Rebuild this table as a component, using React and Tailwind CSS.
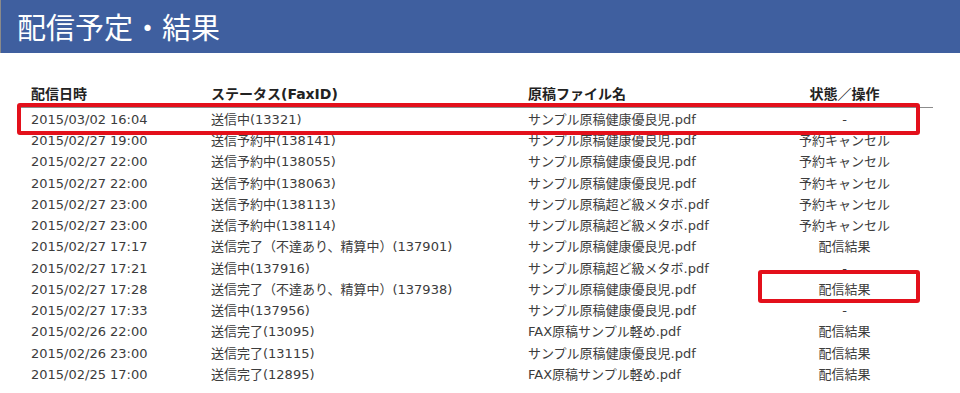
const rows = [
  ["2015/03/02 16:04", "送信中(13321)", "サンプル原稿健康優良児.pdf", "-"],
  ["2015/02/27 19:00", "送信予約中(138141)", "サンプル原稿健康優良児.pdf", "予約キャンセル"],
  ["2015/02/27 22:00", "送信予約中(138055)", "サンプル原稿健康優良児.pdf", "予約キャンセル"],
  ["2015/02/27 22:00", "送信予約中(138063)", "サンプル原稿健康優良児.pdf", "予約キャンセル"],
  ["2015/02/27 23:00", "送信予約中(138113)", "サンプル原稿超ど級メタボ.pdf", "予約キャンセル"],
  ["2015/02/27 23:00", "送信予約中(138114)", "サンプル原稿超ど級メタボ.pdf", "予約キャンセル"],
  ["2015/02/27 17:17", "送信完了（不達あり、精算中）(137901)", "サンプル原稿健康優良児.pdf", "配信結果"],
  ["2015/02/27 17:21", "送信中(137916)", "サンプル原稿超ど級メタボ.pdf", "-"],
  ["2015/02/27 17:28", "送信完了（不達あり、精算中）(137938)", "サンプル原稿健康優良児.pdf", "配信結果"],
  ["2015/02/27 17:33", "送信中(137956)", "サンプル原稿健康優良児.pdf", "-"],
  ["2015/02/26 22:00", "送信完了(13095)", "FAX原稿サンプル軽め.pdf", "配信結果"],
  ["2015/02/26 23:00", "送信完了(13115)", "サンプル原稿健康優良児.pdf", "配信結果"],
  ["2015/02/25 17:00", "送信完了(12895)", "FAX原稿サンプル軽め.pdf", "配信結果"],
];

export default function App() {
  return (
    <div className="relative w-[960px] h-[393px] overflow-hidden bg-white font-['DejaVu_Sans','Noto_Sans_CJK_JP',sans-serif]">
      <div className="h-[53px] flex items-center pl-[16px] bg-[#3f5f9f] border-l border-[#8a8a8a] text-white text-[29px] font-['Noto_Sans_CJK_JP',sans-serif]">
        配信予定・結果
      </div>

      <div className="ml-[17px] w-[916px] mt-[29px]">
        <div className="grid grid-cols-[194px_317px_228px_177px] h-[26px] items-center border-b border-[#8c8c8c] text-[14px] font-bold text-[#222]">
          <div className="pl-[14px]">配信日時</div>
          <div>ステータス(FaxID)</div>
          <div>原稿ファイル名</div>
          <div className="text-center">状態／操作</div>
        </div>
        <div className="pt-[1px]">
          {rows.map((r, i) => (
            <div
              key={i}
              className="grid grid-cols-[194px_317px_228px_177px] h-[21.25px] items-center text-[13px] text-[#3c3c3c] whitespace-nowrap"
            >
              <div className="pl-[14px]">{r[0]}</div>
              <div>{r[1]}</div>
              <div>{r[2]}</div>
              <div className="text-center">{r[3]}</div>
            </div>
          ))}
        </div>
      </div>

      {/* highlight boxes */}
      <div className="absolute left-[17px] top-[103px] w-[903px] h-[32px] border-[4px] border-[#e3101b] rounded-[3px]" />
      <div className="absolute left-[758px] top-[270px] w-[162px] h-[33px] border-[4px] border-[#e3101b] rounded-[3px]" />
    </div>
  );
}
